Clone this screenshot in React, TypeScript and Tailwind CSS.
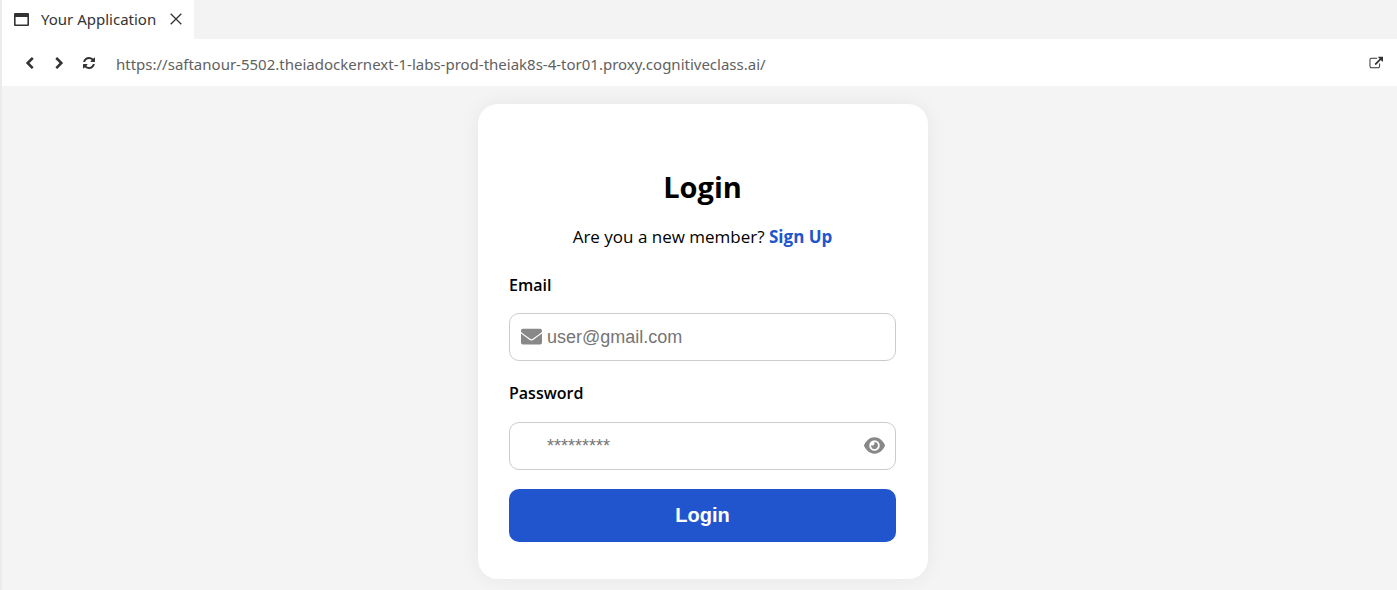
import { useState } from 'react';
import type { ReactNode } from 'react';
import { FaEnvelope } from 'react-icons/fa';
import { FaEye } from 'react-icons/fa6';

function Glyph({ className, viewBox = '0 0 1792 1792', d }: { className: string; viewBox?: string; d: string }) {
  return (
    <svg className={className} viewBox={viewBox} fill="currentColor" aria-hidden="true">
      <path d={d} />
    </svg>
  );
}

const icons = {
  back: 'M1427 301l-531 531 531 531q19 19 19 45t-19 45l-166 166q-19 19-45 19t-45-19l-742-742q-19-19-19-45t19-45l742-742q19-19 45-19t45 19l166 166q19 19 19 45t-19 45z',
  forward:
    'M1363 877l-742 742q-19 19-45 19t-45-19l-166-166q-19-19-19-45t19-45l531-531-531-531q-19-19-19-45t19-45l166-166q19-19 45-19t45 19l742 742q19 19 19 45t-19 45z',
  refresh:
    'M1639 1056q0 5-1 7-64 268-268 434.5t-478 166.5q-146 0-282.5-55t-243.5-157l-129 129q-19 19-45 19t-45-19-19-45v-448q0-26 19-45t45-19h448q26 0 45 19t19 45-19 45l-137 137q71 66 161 102t187 36q134 0 250-65t186-179q11-17 53-117 8-23 30-23h192q13 0 22.5 9.5t9.5 22.5zm25-800v448q0 26-19 45t-45 19h-448q-26 0-45-19t-19-45 19-45l138-138q-148-137-349-137-134 0-250 65t-186 179q-11 17-53 117-8 23-30 23h-199q-13 0-22.5-9.5t-9.5-22.5v-7q65-268 270-434.5t480-166.5q146 0 284 55.5t245 156.5l130-129q19-19 45-19t45 19 19 45z',
  external:
    'M1472 989v320q0 119-84.5 203.5t-203.5 84.5h-832q-119 0-203.5-84.5t-84.5-203.5v-832q0-119 84.5-203.5t203.5-84.5h704q14 0 23 9t9 23v64q0 14-9 23t-23 9h-704q-66 0-113 47t-47 113v832q0 66 47 113t113 47h832q66 0 113-47t47-113v-320q0-14 9-23t23-9h64q14 0 23 9t9 23zm384-864v512q0 26-19 45t-45 19-45-19l-176-176-652 652q-10 10-23 10t-23-10l-114-114q-10-10-10-23t10-23l652-652-176-176q-19-19-19-45t19-45 45-19h512q26 0 45 19t19 45z',
};

function ToolButton({ label, children }: { label: string; children: ReactNode }) {
  return (
    <button type="button" aria-label={label} className="flex h-6 w-[30px] items-center justify-center text-[#333333]">
      {children}
    </button>
  );
}

function TabBar() {
  return (
    <div className="flex h-[39px] bg-[#f3f3f3]">
      <div className="flex items-center bg-white px-3 pb-px text-[#333333]">
        <svg className="h-[13px] w-[15px]" viewBox="0 0 15 13" aria-hidden="true">
          <path fill="currentColor" fillRule="evenodd" d="M1 0h13a1 1 0 0 1 1 1v11a1 1 0 0 1-1 1H1a1 1 0 0 1-1-1V1a1 1 0 0 1 1-1zM1.6 4v7.4h11.8V4z" />
        </svg>
        <span className="ml-3 text-[15px] leading-5">Your Application</span>
        <button type="button" aria-label="Close tab" className="ml-[14px] flex h-5 w-3 items-center justify-center">
          <svg className="size-3" viewBox="0 0 12 12" fill="none" stroke="currentColor" strokeWidth="1.3" aria-hidden="true">
            <path d="M0.7 0.7L11.3 11.3M11.3 0.7L0.7 11.3" />
          </svg>
        </button>
      </div>
    </div>
  );
}

function Toolbar() {
  return (
    <div className="flex h-[47px] items-center bg-white pt-px pr-[6px] pl-3">
      <ToolButton label="Back">
        <Glyph className="size-[13px]" d={icons.back} />
      </ToolButton>
      <ToolButton label="Forward">
        <Glyph className="size-[13px]" d={icons.forward} />
      </ToolButton>
      <ToolButton label="Reload">
        <Glyph className="size-[14px]" d={icons.refresh} />
      </ToolButton>
      <input
        type="text"
        aria-label="Address"
        defaultValue="https://saftanour-5502.theiadockernext-1-labs-prod-theiak8s-4-tor01.proxy.cognitiveclass.ai/"
        className="ml-3 h-8 min-w-0 flex-1 bg-transparent pt-0.5 text-[15px] text-[#616161] outline-none"
      />
      <ToolButton label="Open in new window">
        <Glyph className="h-[14px] w-[14px]" viewBox="0 0 1856 1792" d={icons.external} />
      </ToolButton>
    </div>
  );
}

const field =
  'h-12 w-full rounded-[10px] border border-[#cccccc] bg-white pl-[37px] font-["Liberation_Sans",Arial,sans-serif] text-[18px] text-black outline-none placeholder:text-[#757575] placeholder:opacity-100';

function LoginCard() {
  const [visible, setVisible] = useState(false);
  return (
    <form
      onSubmit={(event) => event.preventDefault()}
      className="w-full max-w-[450px] rounded-[20px] bg-white pt-[63px] pr-8 pb-[37px] pl-[31px] font-['Open_Sans','Noto_Sans',sans-serif] text-black shadow-[0_0_20px_rgba(0,0,0,0.06)]"
    >
      <h1 className="text-center text-[29px] leading-10 font-bold">Login</h1>
      <p className="mt-[18px] text-center text-[17px] leading-6">
        Are you a new member?{' '}
        <a href="#signup" className="font-bold text-[#2155cd]">
          Sign Up
        </a>
      </p>
      <label htmlFor="email" className="mt-6 block text-base leading-6 font-semibold">
        Email
      </label>
      <div className="relative mt-4">
        <FaEnvelope className="absolute top-[13px] left-3 size-[21px] text-[#888888]" />
        <input id="email" type="email" placeholder="user@gmail.com" className={field} />
      </div>
      <label htmlFor="password" className="mt-5 block text-base leading-6 font-semibold">
        Password
      </label>
      <div className="relative mt-[17px]">
        <input id="password" type={visible ? 'text' : 'password'} placeholder="*********" className={field} />
        <button
          type="button"
          aria-label="Show password"
          aria-pressed={visible}
          onClick={() => setVisible(!visible)}
          className="absolute top-[13px] right-[11px] text-[#888888]"
        >
          <FaEye className="size-[21px]" />
        </button>
      </div>
      <button
        type="submit"
        className="mt-[19px] block h-[53px] w-full rounded-[10px] bg-[#2155cd] pb-0.5 font-['Liberation_Sans',Arial,sans-serif] text-[20px] font-bold text-white"
      >
        Login
      </button>
    </form>
  );
}

export default function App() {
  return (
    <div className="flex min-h-screen flex-col border-l-2 border-[#ebebeb] bg-[#f4f4f4] font-['Noto_Sans','Open_Sans',sans-serif]">
      <TabBar />
      <Toolbar />
      <main className="flex flex-1 items-start justify-center pt-[18px] pb-[11px] pl-[7px]">
        <LoginCard />
      </main>
    </div>
  );
}
